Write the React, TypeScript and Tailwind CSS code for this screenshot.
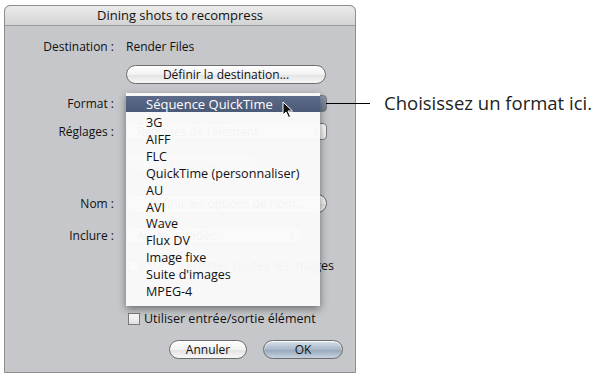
import React from "react";

const font = { fontFamily: '"Open Sans", "Noto Sans", "DejaVu Sans", sans-serif' };

function Label({ children }: { children: React.ReactNode }) {
  return (
    <div className="w-[110px] text-right pr-[1px] text-[12px] text-[#111] leading-none">
      {children}
    </div>
  );
}

function PillButton({ children, w, blue }: { children: React.ReactNode; w: string; blue?: boolean }) {
  return (
    <div
      className={`${w} h-[19px] rounded-full border border-[#6d6d6d] flex items-center justify-center text-[12px] leading-none text-[#111] shadow-[inset_0_1px_1px_rgba(255,255,255,0.9)] ${
        blue
          ? "bg-[linear-gradient(#d8e1ec,#a9b7c8_50%,#95a6ba_51%,#c6d2df)]"
          : "bg-[linear-gradient(#ffffff,#f1f1f1_50%,#e2e2e2_51%,#f7f7f7)]"
      }`}
    >
      {children}
    </div>
  );
}

function Popup({ children, w, dark }: { children: React.ReactNode; w: string; dark?: boolean }) {
  return (
    <div
      className={`${w} h-[17px] rounded-[4px] border border-[#7b7b7b] ${
        dark ? "bg-[linear-gradient(#8c99ad,#6b7a92)]" : "bg-[linear-gradient(#ffffff,#ececec)]"
      } flex items-center pl-[10px] pr-[6px] text-[12px] leading-none text-[#111]`}
    >
      <span className="flex-1">{children}</span>
      <span className="text-[9px]">⇕</span>
    </div>
  );
}

const items = [
  "3G",
  "AIFF",
  "FLC",
  "QuickTime (personnaliser)",
  "AU",
  "AVI",
  "Wave",
  "Flux DV",
  "Image fixe",
  "Suite d'images",
  "MPEG-4",
];

export default function App() {
  return (
    <div className="w-[598px] h-[378px] bg-white relative overflow-hidden" style={font}>
      <div className="pt-[5px] pl-[4px]">
        <div className="relative w-[352px] h-[368px] rounded-t-[6px] border border-[#8e8e8e] bg-[#c6c7ca] overflow-visible">
          {/* title bar */}
          <div className="h-[20px] rounded-t-[6px] bg-[linear-gradient(#ececec,#d3d3d3)] border-b border-[#9b9b9b] flex items-center justify-center text-[13px] text-[#111] leading-none">
            Dining shots to recompress
          </div>

          {/* Destination */}
          <div className="mt-[13px] h-[16px] flex items-center gap-[11px]">
            <Label>Destination :</Label>
            <div className="text-[12px] leading-none text-[#111]">Render Files</div>
          </div>

          {/* Définir la destination */}
          <div className="mt-[10px] flex pl-[121px]">
            <PillButton w="w-[200px]">Définir la destination...</PillButton>
          </div>

          {/* Format */}
          <div className="mt-[11px] h-[17px] flex items-center gap-[11px]">
            <Label>Format :</Label>
            <Popup w="w-[201px]" dark>Séquence QuickTime</Popup>
          </div>

          {/* Réglages */}
          <div className="mt-[11px] h-[17px] flex items-center gap-[11px]">
            <Label>Réglages :</Label>
            <Popup w="w-[201px]">Réglages de l'élément</Popup>
          </div>

          {/* hidden row */}
          <div className="mt-[14px] flex pl-[121px] opacity-60">
            <PillButton w="w-[130px]">Réglages...</PillButton>
          </div>

          {/* Nom */}
          <div className="mt-[21px] h-[19px] flex items-center gap-[11px]">
            <Label>Nom :</Label>
            <PillButton w="w-[201px]">Définir les options de nom...</PillButton>
          </div>

          {/* Inclure */}
          <div className="mt-[14px] h-[17px] flex items-center gap-[11px]">
            <Label>Inclure :</Label>
            <Popup w="w-[176px]">Audio et vidéo</Popup>
          </div>

          {/* Exporter */}
          <div className="mt-[14px] h-[16px] flex items-center gap-[4px] pl-[123px] pr-[21px] text-[12.5px] leading-none text-[#111]">
            <div className="w-[12px] h-[12px] border border-[#7a7a7a] bg-[linear-gradient(#ffffff,#e2e2e2)]" />
            <span className="flex-1 text-right">Exporter toutes les images</span>
          </div>

          {/* Utiliser */}
          <div className="mt-[37px] h-[16px] flex items-center gap-[4px] pl-[123px] text-[12.5px] leading-none text-[#111]">
            <div className="w-[12px] h-[12px] border border-[#7a7a7a] bg-[linear-gradient(#ffffff,#dedede)]" />
            <span>Utiliser entrée/sortie élément</span>
          </div>

          {/* Buttons */}
          <div className="mt-[13px] flex pl-[164px] gap-[16px]">
            <PillButton w="w-[78px]">Annuler</PillButton>
            <PillButton w="w-[80px]" blue>
              OK
            </PillButton>
          </div>

          {/* Popup menu overlay */}
          <div className="absolute left-[121px] top-[87px] w-[194px] h-[213px] bg-[rgba(250,250,250,0.97)] shadow-[0_3px_8px_rgba(0,0,0,0.45)] pt-[3px]">
            <div className="h-[16px] bg-[linear-gradient(#5b6b89,#4b5a77)] flex items-center pl-[20px] text-[13px] leading-none text-white relative">
              Séquence QuickTime
              <svg className="absolute left-[156px] top-[5px]" width="12" height="18" viewBox="0 0 12 18">
                <path d="M1 1 L1 14 L4 11 L6.5 16.5 L8.5 15.5 L6 10 L10.5 10 Z" fill="#111" stroke="#fff" strokeWidth="1" />
              </svg>
            </div>
            <div className="pt-[3px]">
              {items.map((t) => (
                <div key={t} className="h-[16.9px] flex items-center pl-[20px] text-[12.6px] leading-none text-[#111]">
                  {t}
                </div>
              ))}
            </div>
          </div>
        </div>
      </div>

      {/* Callout */}
      <div className="absolute left-[326px] top-[92px] h-[22px] flex items-center gap-[14px]">
        <div className="w-[44px] h-[1px] bg-black" />
        <div className="text-[18.5px] leading-none text-[#222]">Choisissez un format ici.</div>
      </div>
    </div>
  );
}
